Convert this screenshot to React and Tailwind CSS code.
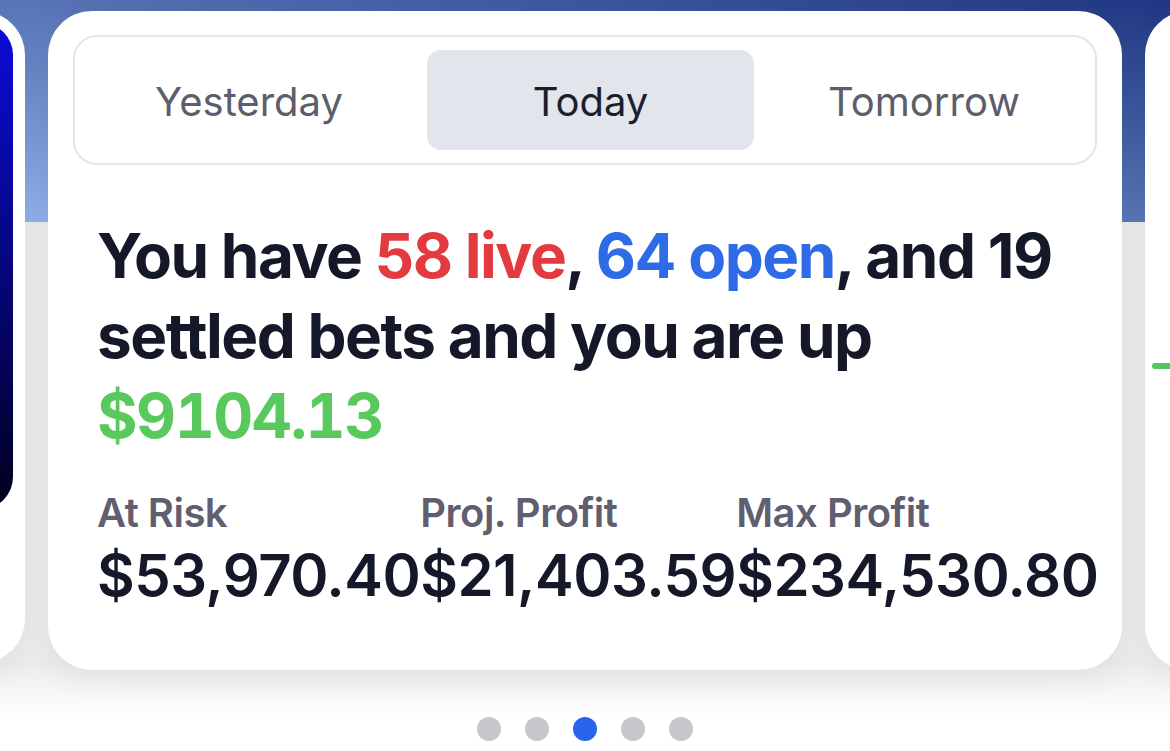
const font = { fontFamily: '"Inter", "Liberation Sans", sans-serif' };

function TabBar() {
  return (
    <div className="flex items-stretch gap-[18px] h-[130px] pl-[14px] py-[13px] border-2 border-[#e4e4ea] rounded-[24px]">
      <button className="w-[320px] flex items-center justify-center pt-[3px] text-[40px] text-[#5d5d6c]">
        Yesterday
      </button>
      <button className="w-[327px] flex items-center justify-center pt-[3px] text-[40px] text-[#1b1e2f] bg-[#e3e5ec] rounded-[14px]">
        Today
      </button>
      <button className="w-[304px] flex items-center justify-center pt-[3px] text-[40px] text-[#5d5d6c]">
        Tomorrow
      </button>
    </div>
  );
}

function Stat({ label, value }) {
  return (
    <div className="shrink-0">
      <p className="text-[40px] leading-[48px] font-semibold text-[#5f5f6f] tracking-[-0.5px]">{label}</p>
      <p className="mt-[6px] text-[58px] leading-[64px] font-semibold text-[#151829] tracking-[-0.5px]">{value}</p>
    </div>
  );
}

export default function App() {
  return (
    <div
      style={font}
      className="w-[1170px] h-[751px] overflow-hidden flex flex-col items-center pt-[11px] bg-no-repeat
        bg-[linear-gradient(to_top_right,#92b3ec,#1f3782),linear-gradient(to_bottom,#ebebeb_0px,#ebebeb_440px,#ffffff_495px)]
        bg-[length:100%_222px,100%_529px] bg-[position:0_0,0_222px]"
    >
      {/* carousel */}
      <div className="w-full flex justify-center gap-[23px]">
        {/* previous card */}
        <div className="shrink-0 w-[1074px] h-[652px] rounded-[44px] bg-white p-3 shadow-[0_8px_30px_rgba(0,0,0,0.05)]">
          <div className="h-[486px] rounded-[32px] bg-[linear-gradient(to_bottom,#0c0cd8,#00001e)]" />
        </div>

        {/* main card */}
        <div className="shrink-0 w-[1074px] h-[659px] rounded-[44px] bg-white px-[25px] pt-[24px] shadow-[0_8px_30px_rgba(0,0,0,0.06)]">
          <TabBar />

          <div className="px-[24px]">
            <h1 className="mt-[51px] text-[62px] leading-[80px] font-bold text-[#151829] tracking-[-1.5px]">
              You have <span className="text-[#e23a3f]">58 live</span>,{' '}
              <span className="text-[#2f6be6]">64 open</span>, and 19 settled bets and you are up{' '}
              <span className="text-[#59c95d] tabular-nums tracking-[-1.5px]">$9104.13</span>
            </h1>

            <div className="mt-[33px] flex">
              <Stat label="At Risk" value="$53,970.40" />
              <Stat label="Proj. Profit" value="$21,403.59" />
              <Stat label="Max Profit" value="$234,530.80" />
            </div>
          </div>
        </div>

        {/* next card */}
        <div className="shrink-0 w-[1074px] h-[659px] rounded-[44px] bg-white pt-[352px] pl-[7px] shadow-[0_8px_30px_rgba(0,0,0,0.05)]">
          <div className="w-[300px] h-[6px] rounded-full bg-[#4fc95b]" />
        </div>
      </div>

      {/* pager dots */}
      <div className="mt-[47px] flex gap-[24px]">
        <span className="w-[24px] h-[24px] rounded-full bg-[#c6c6cb]" />
        <span className="w-[24px] h-[24px] rounded-full bg-[#c6c6cb]" />
        <span className="w-[24px] h-[24px] rounded-full bg-[#2864ee]" />
        <span className="w-[24px] h-[24px] rounded-full bg-[#c6c6cb]" />
        <span className="w-[24px] h-[24px] rounded-full bg-[#c6c6cb]" />
      </div>
    </div>
  );
}
